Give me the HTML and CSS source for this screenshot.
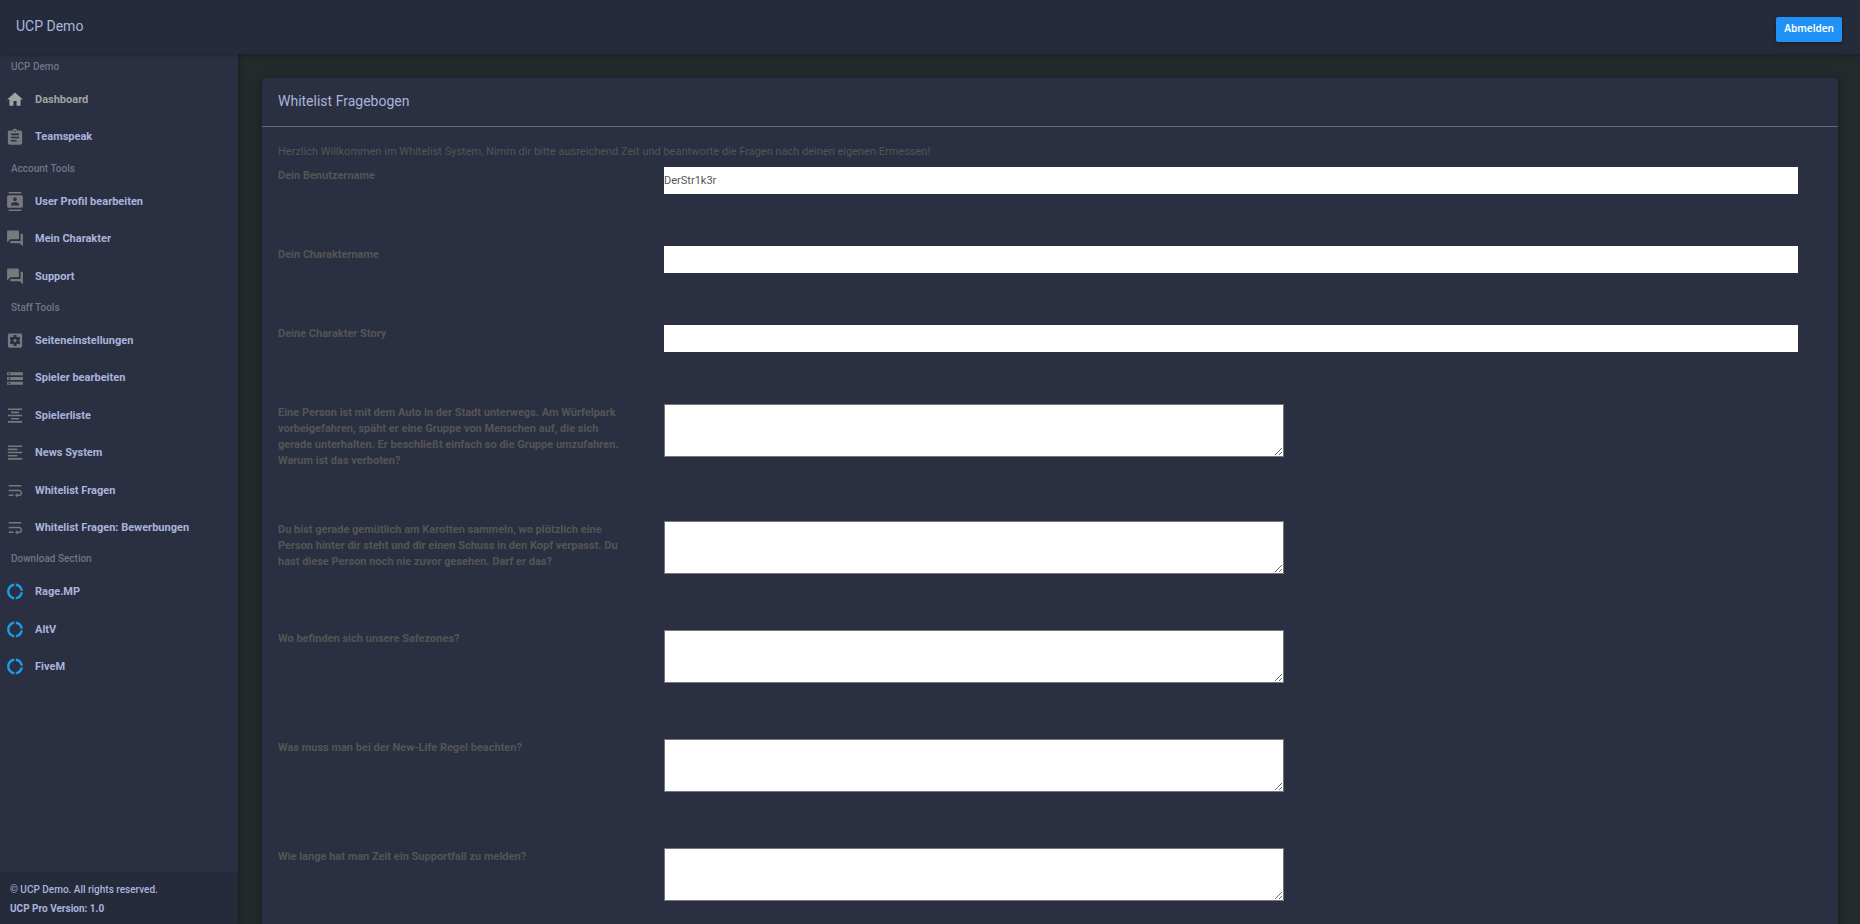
FILE: index.html
```html
<!DOCTYPE html>
<html lang="de">
<head>
<meta charset="utf-8">
<title>UCP Demo</title>
<link rel="stylesheet" href="styles.css">
</head>
<body>
<svg class="sprite" aria-hidden="true">
  <symbol id="home" viewBox="0 0 24 24"><path d="M10 20v-6h4v6h5v-8h3L12 3 2 12h3v8z"/></symbol>
  <symbol id="assignment" viewBox="0 0 24 24"><path d="M19 3h-4.180C14.400 1.840 13.300 1 12 1c-1.300 0-2.400 .840-2.820 2H5c-1.100 0-2 .9-2 2v14c0 1.100 .9 2 2 2h14c1.100 0 2-.9 2-2V5c0-1.100-.9-2-2-2zm-7 0c.55 0 1 .45 1 1s-.45 1-1 1-1-.45-1-1 .45-1 1-1zm2 14H7v-2h7v2zm3-4H7v-2h10v2zm0-4H7V7h10v2z"/></symbol>
  <symbol id="contacts" viewBox="0 0 24 24"><path d="M20 0H4v2h16V0zM4 24h16v-2H4v2zM20 4H4c-1.100 0-2 .9-2 2v12c0 1.100 .9 2 2 2h16c1.100 0 2-.9 2-2V6c0-1.100-.9-2-2-2zm-8 2.750c1.240 0 2.250 1.010 2.250 2.250s-1.010 2.250-2.250 2.250S9.750 10.240 9.750 9 10.760 6.750 12 6.750zM17 17H7v-1.500c0-1.670 3.330-2.500 5-2.500s5 .830 5 2.500V17z"/></symbol>
  <symbol id="forum" viewBox="0 0 24 24"><path d="M21 6h-2v9H6v2c0 .55.45 1 1 1h11l4 4V7c0-.55-.45-1-1-1zm-4 6V3c0-.55-.45-1-1-1H3c-.55 0-1 .45-1 1v14l4-4h10c.55 0 1-.45 1-1z"/></symbol>
  <symbol id="settings" viewBox="0 0 24 24"><path d="M12 10c-1.100 0-2 .9-2 2s.9 2 2 2 2-.9 2-2-.9-2-2-2zm7-7H5c-1.110 0-2 .9-2 2v14c0 1.100.89 2 2 2h14c1.110 0 2-.9 2-2V5c0-1.100-.89-2-2-2zm-1.750 9c0 .23-.02.46-.05.68l1.480 1.160c.13.110.17.300.08.450l-1.400 2.420c-.09.150-.27.210-.43.150l-1.740-.7c-.36.280-.76.510-1.180.690l-.26 1.850c-.03.170-.18.300-.35.300h-2.800c-.17 0-.32-.13-.35-.29l-.26-1.850c-.43-.18-.82-.41-1.180-.69l-1.740.7c-.16.060-.34 0-.43-.15l-1.400-2.420c-.09-.15-.05-.34.080-.45l1.480-1.160c-.03-.23-.05-.46-.05-.69 0-.23.020-.46.050-.68l-1.480-1.160c-.13-.11-.17-.3-.08-.45l1.400-2.420c.09-.15.270-.21.430-.15l1.740.7c.36-.28.760-.51 1.180-.69l.26-1.850c.03-.17.180-.3.350-.3h2.800c.17 0 .320.130.350.290l.26 1.850c.43.180.820.410 1.180.690l1.740-.7c.16-.06.340 0 .430.150l1.400 2.420c.09.150.050.340-.08.450l-1.480 1.160c.03.230.050.460.050.690z"/></symbol>
  <symbol id="storage" viewBox="0 0 24 24"><path d="M2 20h20v-4H2v4zm2-3h2v2H4v-2zM2 4v4h20V4H2zm4 3H4V5h2v2zm-4 7h20v-4H2v4zm2-3h2v2H4v-2z"/></symbol>
  <symbol id="center" viewBox="0 0 24 24"><path d="M7 15v2h10v-2H7zm-4 6h18v-2H3v2zm0-8h18v-2H3v2zm4-6v2h10V7H7zM3 3v2h18V3H3z"/></symbol>
  <symbol id="left" viewBox="0 0 24 24"><path d="M15 15H3v2h12v-2zm0-8H3v2h12V7zM3 13h18v-2H3v2zm0 8h18v-2H3v2zM3 3v2h18V3H3z"/></symbol>
  <symbol id="wrap" viewBox="0 0 24 24"><path d="M4 19h6v-2H4v2zM20 5H4v2h16V5zm-3 6H4v2h13.250c1.100 0 2 .9 2 2s-.9 2-2 2H15v-2l-3 3 3 3v-2h2c2.210 0 4-1.790 4-4s-1.790-4-4-4z"/></symbol>
  <symbol id="donut" viewBox="0 0 24 24"><path d="M11 5.080V2c-5 .5-9 4.810-9 10s4 9.500 9 10v-3.080c-3-.48-6-3.400-6-6.920s3-6.440 6-6.920zM18.970 11H22c-.47-5-4-8.530-9-9v3.080C16 5.510 18.540 8 18.970 11zM13 18.920V22c5-.47 8.530-4 9-9h-3.030c-.43 3-2.970 5.490-5.970 5.920z"/></symbol>
</svg>

<header class="topbar">
  <a class="brand" href="#">UCP Demo</a>
  <button class="logout" type="button">Abmelden</button>
</header>

<div class="layout">
  <aside class="sidebar">
    <nav class="menu">
      <h2 class="menu-title">UCP Demo</h2>
      <a class="item active" href="#"><svg class="icon"><use href="#home"/></svg>Dashboard</a>
      <a class="item" href="#"><svg class="icon"><use href="#assignment"/></svg>Teamspeak</a>
      <h2 class="menu-title">Account Tools</h2>
      <a class="item" href="#"><svg class="icon"><use href="#contacts"/></svg>User Profil bearbeiten</a>
      <a class="item" href="#"><svg class="icon"><use href="#forum"/></svg>Mein Charakter</a>
      <a class="item" href="#"><svg class="icon"><use href="#forum"/></svg>Support</a>
      <h2 class="menu-title">Staff Tools</h2>
      <a class="item" href="#"><svg class="icon"><use href="#settings"/></svg>Seiteneinstellungen</a>
      <a class="item" href="#"><svg class="icon"><use href="#storage"/></svg>Spieler bearbeiten</a>
      <a class="item" href="#"><svg class="icon"><use href="#center"/></svg>Spielerliste</a>
      <a class="item" href="#"><svg class="icon"><use href="#left"/></svg>News System</a>
      <a class="item" href="#"><svg class="icon"><use href="#wrap"/></svg>Whitelist Fragen</a>
      <a class="item" href="#"><svg class="icon"><use href="#wrap"/></svg>Whitelist Fragen: Bewerbungen</a>
      <h2 class="menu-title">Download Section</h2>
      <a class="item download" href="#"><svg class="icon"><use href="#donut"/></svg>Rage.MP</a>
      <a class="item download" href="#"><svg class="icon"><use href="#donut"/></svg>AltV</a>
      <a class="item download" href="#"><svg class="icon"><use href="#donut"/></svg>FiveM</a>
    </nav>
    <footer class="legal">
      <div>© UCP Demo. All rights reserved.</div>
      <div class="version">UCP Pro Version: 1.0</div>
    </footer>
  </aside>

  <main class="content">
    <section class="card">
      <h1 class="card-title">Whitelist Fragebogen</h1>
      <form class="card-body">
        <p class="intro">Herzlich Willkommen im Whitelist System, Nimm dir bitte ausreichend Zeit und beantworte die Fragen nach deinen eigenen Ermessen!</p>
        <div class="row"><label for="user">Dein Benutzername</label><div class="field"><input id="user" type="text" value="DerStr1k3r"></div></div>
        <div class="row"><label for="char">Dein Charaktername</label><div class="field"><input id="char" type="text"></div></div>
        <div class="row"><label for="story">Deine Charakter Story</label><div class="field"><input id="story" type="text"></div></div>
        <div class="row"><label for="q1">Eine Person ist mit dem Auto in der Stadt unterwegs. Am Würfelpark vorbeigefahren, späht er eine Gruppe von Menschen auf, die sich gerade unterhalten. Er beschließt einfach so die Gruppe umzufahren. Warum ist das verboten?</label><div class="field"><textarea id="q1"></textarea></div></div>
        <div class="row"><label for="q2">Du bist gerade gemütlich am Karotten sammeln, wo plötzlich eine Person hinter dir steht und dir einen Schuss in den Kopf verpasst. Du hast diese Person noch nie zuvor gesehen. Darf er das?</label><div class="field"><textarea id="q2"></textarea></div></div>
        <div class="row"><label for="q3">Wo befinden sich unsere Safezones?</label><div class="field"><textarea id="q3"></textarea></div></div>
        <div class="row"><label for="q4">Was muss man bei der New-Life Regel beachten?</label><div class="field"><textarea id="q4"></textarea></div></div>
        <div class="row"><label for="q5">Wie lange hat man Zeit ein Supportfall zu melden?</label><div class="field"><textarea id="q5"></textarea></div></div>
      </form>
    </section>
  </main>
</div>
</body>
</html>
```

FILE: styles.css
```css
* {
  box-sizing: border-box;
}

body {
  display: flex;
  flex-direction: column;
  height: 100vh;
  margin: 0;
  background: #24292c;
  color: #555;
  font-family: Roboto, "Liberation Sans", sans-serif;
  font-size: 11px;
  line-height: 16px;
}

.sprite {
  display: none;
}

.topbar {
  position: relative;
  display: flex;
  flex: none;
  align-items: flex-start;
  justify-content: space-between;
  height: 54px;
  padding: 16px 18px 0 16px;
  background: #262b3b;
  box-shadow: 0 1px 4px rgba(0, 0, 0, 0.3);
}

.brand {
  color: #a9b4dc;
  font-size: 14px;
  line-height: 20px;
  text-decoration: none;
}

.logout {
  height: 25px;
  margin-top: 1px;
  padding: 0 8px 3px;
  border: 0;
  border-radius: 2px;
  background: #2091f5;
  box-shadow: 0 2px 4px rgba(0, 0, 0, 0.3);
  color: #fff;
  font-family: "Noto Sans", sans-serif;
  font-size: 10px;
  font-weight: 600;
}

.layout {
  display: flex;
  flex: 1;
  min-height: 0;
}

.sidebar {
  display: flex;
  flex: none;
  flex-direction: column;
  width: 238px;
  background: #2b2f42;
  box-shadow: 1px 0 4px rgba(0, 0, 0, 0.3);
}

.menu {
  flex: 1;
}

.menu-title {
  margin: 0;
  padding: 7px 11px 8px;
  color: #71758a;
  font-size: 10px;
  font-weight: 500;
  line-height: 12px;
}

.item {
  display: flex;
  align-items: center;
  gap: 10px;
  padding: 11px 5px;
  color: #a9b4dc;
  font-weight: 700;
  line-height: 1.4;
  text-decoration: none;
}

.item.active {
  color: #a3a3a6;
}

.icon {
  width: 20px;
  height: 19px;
  margin: -2px 0;
  fill: #78797d;
}

.active .icon {
  fill: #a3a3a6;
}

.download .icon {
  fill: #1a9de6;
}

.legal {
  padding: 8px 10px 6px;
  background: #262b3b;
  color: #a9b4dc;
  font-size: 10px;
  font-weight: 500;
  line-height: 19px;
}

.version {
  font-weight: 700;
}

.content {
  flex: 1;
  min-width: 0;
  padding: 24px 22px 24px 24px;
  overflow: auto;
  scrollbar-width: none;
}

.card {
  border-radius: 2px;
  background: #2b2f42;
  box-shadow: 0 1px 8px rgba(0, 0, 0, 0.3);
}

.card-title {
  margin: 0;
  padding: 13px 16px 15px;
  border-bottom: 1px solid #62677a;
  color: #a9b4dc;
  font-size: 14px;
  font-weight: 400;
  line-height: 20px;
}

.card-body {
  padding: 17px 16px 16px;
}

.intro {
  margin: 0 0 7px;
}

.row {
  display: grid;
  grid-template-columns: 1fr 3fr;
  margin-bottom: 52px;
}

.row label {
  padding: 1px 36px 0 0;
  font-weight: 700;
}

.field {
  padding-right: 24px;
}

.field input,
.field textarea {
  display: block;
  border: 0;
  border-radius: 0;
  background: #fff;
  color: #555;
  font: inherit;
}

.field input {
  width: 100%;
  height: 27px;
  padding: 0;
}

.field textarea {
  width: 620px;
  max-width: 100%;
  height: 53px;
  margin-bottom: 4px;
  padding: 2px;
  border: 1px solid #767676;
}
```
